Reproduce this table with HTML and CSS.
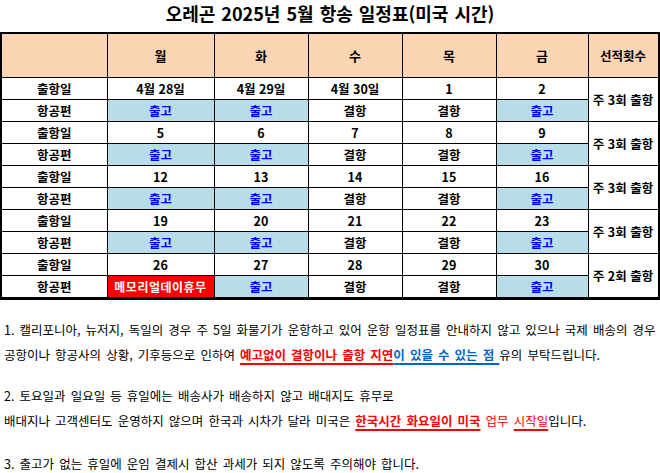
FILE: index.html
```html
<!DOCTYPE html>
<html lang="ko">
<head>
<meta charset="utf-8">
<link rel="stylesheet" href="styles.css">
</head>
<body>
<h1 class="title">오레곤 2025년 5월 항송 일정표(미국 시간)</h1>
<table class="sched">
  <colgroup>
    <col class="c-label"><col class="c-mon"><col class="c-day"><col class="c-day"><col class="c-day"><col class="c-fri"><col class="c-cnt">
  </colgroup>
  <thead>
    <tr class="head"><th></th><th>월</th><th>화</th><th>수</th><th>목</th><th>금</th><th class="cnt-h">선적횟수</th></tr>
  </thead>
  <tbody>
    <tr><td>출항일</td><td>4월 28일</td><td>4월 29일</td><td>4월 30일</td><td>1</td><td>2</td><td rowspan="2" class="cnt">주 3회 출항</td></tr>
    <tr><td>항공편</td><td class="out">출고</td><td class="out">출고</td><td>결항</td><td>결항</td><td class="out">출고</td></tr>
    <tr><td>출항일</td><td>5</td><td>6</td><td>7</td><td>8</td><td>9</td><td rowspan="2" class="cnt">주 3회 출항</td></tr>
    <tr><td>항공편</td><td class="out">출고</td><td class="out">출고</td><td>결항</td><td>결항</td><td class="out">출고</td></tr>
    <tr><td>출항일</td><td>12</td><td>13</td><td>14</td><td>15</td><td>16</td><td rowspan="2" class="cnt">주 3회 출항</td></tr>
    <tr><td>항공편</td><td class="out">출고</td><td class="out">출고</td><td>결항</td><td>결항</td><td class="out">출고</td></tr>
    <tr><td>출항일</td><td>19</td><td>20</td><td>21</td><td>22</td><td>23</td><td rowspan="2" class="cnt">주 3회 출항</td></tr>
    <tr><td>항공편</td><td class="out">출고</td><td class="out">출고</td><td>결항</td><td>결항</td><td class="out">출고</td></tr>
    <tr><td>출항일</td><td>26</td><td>27</td><td>28</td><td>29</td><td>30</td><td rowspan="2" class="cnt">주 2회 출항</td></tr>
    <tr><td>항공편</td><td class="holiday">메모리얼데이휴무</td><td class="out">출고</td><td>결항</td><td>결항</td><td class="out">출고</td></tr>
  </tbody>
</table>
<div class="notes">
  <p class="note n1">1. 캘리포니아, 뉴저지, 독일의 경우 주 5일 화물기가 운항하고 있어 운항 일정표를 안내하지 않고 있으나 국제 배송의 경우<br>공항이나 항공사의 상황, 기후등으로 인하여 <span class="red-b u">예고없이 결항이나 출항 지연</span><span class="blue u">이 있을 수 있는 점 </span>유의 부탁드립니다.</p>
  <p class="note n2">2. 토요일과 일요일 등 휴일에는 배송사가 배송하지 않고 배대지도 휴무로<br>배대지나 고객센터도 운영하지 않으며 한국과 시차가 달라 미국은 <span class="red-b u">한국시간 화요일이 미국</span><span class="red"> 업무 </span><span class="red u">시작일</span>입니다.</p>
  <p class="note n3">3. 출고가 없는 휴일에 운임 결제시 합산 과세가 되지 않도록 주의해야 합니다.</p>
</div>
</body>
</html>
```
FILE: styles.css
```css
html, body {
  margin: 0;
  padding: 0;
  background: #fff;
}
body {
  font-family: "Noto Sans CJK KR", "Noto Sans", sans-serif;
  color: #000;
  width: 660px;
}
.title {
  margin: 0;
  height: 32px;
  font-size: 18px;
  line-height: 27px;
  font-weight: bold;
  text-align: center;
  word-spacing: 1px;
}
.sched {
  border-collapse: collapse;
  table-layout: fixed;
  width: 658px;
  border-top: 2px solid #000;
  border-left: 2px solid #000;
  border-right: 3px solid #000;
  border-bottom: 3px solid #000;
  font-size: 12.5px;
  font-weight: bold;
}
.c-label { width: 106px; }
.c-mon { width: 107px; }
.c-day { width: 94px; }
.c-fri { width: 92px; }
.c-cnt { width: 71px; }
.sched th, .sched td {
  border: 1px solid #000;
  padding: 0;
  text-align: center;
  vertical-align: middle;
  height: 21px;
  line-height: 16px;
  white-space: nowrap;
}
.sched .head th {
  background: #fcd5b4;
  height: 43px;
  font-size: 13px;
}
.sched .head th.cnt-h {
  font-size: 12.5px;
}
.sched td.out {
  background: #b7dee8;
  color: #0000ff;
}
.sched td.holiday {
  background: #ff0000;
  color: #fff;
  letter-spacing: 0.5px;
  font-size: 12px;
}
.sched td.cnt {
  background: #fff;
  font-size: 12.5px;
}
.notes {
  font-size: 12.5px;
  line-height: 25px;
  word-spacing: 1.6px;
}
.note {
  margin: 0;
  padding-left: 4px;
  white-space: nowrap;
}
.n1 { margin-top: 17px; }
.n2 { margin-top: 16px; }
.n3 { margin-top: 18px; }
.u {
  text-decoration: underline;
  text-decoration-thickness: 2px;
  text-underline-offset: 3px;
}
.red-b { color: #ff0000; font-weight: bold; }
.red { color: #ff0000; }
.blue { color: #0066cc; font-weight: bold; }
```
